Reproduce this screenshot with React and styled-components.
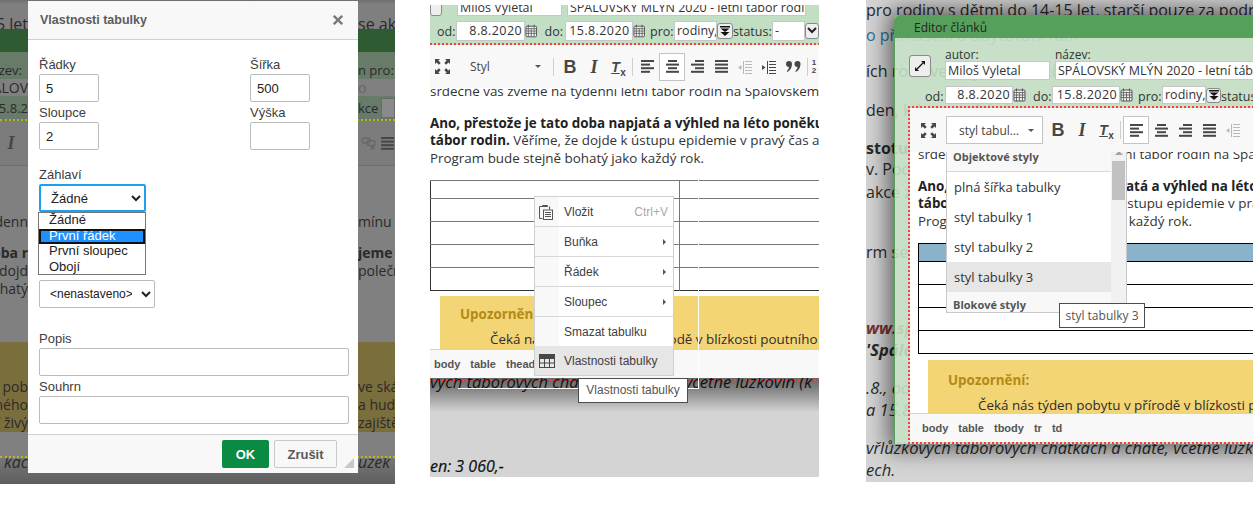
import React from 'react'
import styled, { createGlobalStyle } from 'styled-components'

const GlobalStyle = createGlobalStyle`
    html, body { margin: 0; padding: 0; background: #fff; }
    body { font-family: "Open Sans", sans-serif; color: #222; }
    * { box-sizing: border-box; }
`

const UI_FONT = '"Liberation Sans", Arial, sans-serif'
const PAGE_FONT = '"Open Sans", sans-serif'
const DOTS_X = 'repeating-linear-gradient(90deg, #ff3b3b 0 2px, transparent 2px 4px)'
const DOTS_Y = 'repeating-linear-gradient(0deg, #ff3b3b 0 2px, transparent 2px 4px)'

const Page = styled.div`
    display: flex;
    align-items: flex-start;
    width: 1256px;
    height: 510px;
    overflow: hidden;
`
const Shot = styled.section`
    position: relative;
    flex: none;
    overflow: hidden;
    width: ${p => p.$w}px;
    height: ${p => p.$h}px;
    margin-left: ${p => p.$left || 0}px;
    background: ${p => p.$bg || '#d4d4d4'};
`

/* ---------- shot 1, dimmed page behind the dialog ---------- */
const Band = styled.div`
    display: grid;
    grid-template-columns: 28px 1fr 37px;
    overflow: hidden;
    height: ${p => p.$h}px;
    background: ${p => p.$bg};
    align-items: ${p => p.$align || 'center'};
    font-size: ${p => p.$size || 14}px;
    font-weight: ${p => (p.$bold ? 700 : 400)};
    font-style: ${p => (p.$italic ? 'italic' : 'normal')};
    color: ${p => p.$color || '#2a2a2a'};
    line-height: 18px;
    border-bottom: ${p => p.$line || 'none'};
    > span { margin-top: ${p => p.$shift || 0}px; }
`
const SlotLeft = styled.span`
    grid-column: 1;
    overflow: hidden;
    white-space: nowrap;
    display: flex;
    justify-content: flex-end;
    padding-right: ${p => p.$pad || 0}px;
    align-self: ${p => (p.$fill ? 'stretch' : 'auto')};
    align-items: center;
    background: ${p => (p.$fill ? '#808080' : 'transparent')};
`
const SlotRight = styled.span`
    grid-column: 3;
    overflow: hidden;
    white-space: nowrap;
    display: flex;
    align-items: center;
    align-self: ${p => (p.$fill ? 'stretch' : 'auto')};
    background: ${p => (p.$fill ? '#808080' : 'transparent')};
    color: ${p => (p.$fill ? '#666' : 'inherit')};
`
const DimBox = styled.span`
    flex: none;
    display: block;
    width: 14px;
    height: 20px;
    margin-left: 3px;
    background: #8a8a8a;
    border: 1px solid #6a6a6a;
`

const Dialog = styled.div`
    position: absolute;
    left: 28px;
    top: 1px;
    width: 330px;
    height: 472px;
    display: flex;
    flex-direction: column;
    background: #fff;
    font-family: ${UI_FONT};
    font-size: 13px;
    color: #404040;
`
const DialogHead = styled.header`
    flex: none;
    height: 39px;
    display: flex;
    align-items: center;
    justify-content: space-between;
    padding: 0 15px 1px 12px;
    background: #f8f8f8;
    border-bottom: 1px solid #d1d1d1;
    font-size: 12.5px;
    font-weight: 700;
    color: #5c5c5c;
`
const DialogBody = styled.div`
    flex: 1;
    padding: 17px 9px 0 11px;
`
const TwoCols = styled.div`
    display: grid;
    grid-template-columns: 211px 60px;
`
const Field = styled.label`
    display: block;
    margin-top: ${p => p.$before || 0}px;
    margin-bottom: ${p => (p.$after === undefined ? 3 : p.$after)}px;
`
const Caption = styled.span`
    display: block;
    height: 17px;
    line-height: 15px;
    font-size: 13px;
    color: #404040;
`
const TextBox = styled.input`
    display: block;
    width: ${p => p.$w || '60px'};
    height: 28px;
    padding: 0 6px;
    border: 1px solid #bcbcbc;
    border-radius: 2px;
    font: 13px ${UI_FONT};
    color: #222;
    background: #fff;
    outline: none;
`
const NativeSelect = styled.select`
    display: block;
    width: ${p => p.$w}px;
    height: 28px;
    padding: 0 6px;
    border: ${p => (p.$focus ? '2px solid #1e9ff2' : '1px solid #bcbcbc')};
    border-radius: 2px;
    font: ${p => (p.$focus ? '13px' : '12px')} ${UI_FONT};
    color: #222;
    background: #fff;
    outline: none;
`
const OptionList = styled.ul`
    list-style: none;
    margin: 0 0 5px -1px;
    padding: 0;
    width: 108px;
    height: 63px;
    border: 1px solid #767676;
    background: #fff;
    font-size: 13px;
    line-height: 14px;
`
const OptionRow = styled.li`
    height: 15.5px;
    padding-left: 10px;
    color: ${p => (p.$active ? '#fff' : '#222')};
    background: ${p => (p.$active ? '#1e90ff' : 'transparent')};
    outline: ${p => (p.$active ? '2px solid #111' : 'none')};
    outline-offset: -2px;
`
const DialogFoot = styled.footer`
    flex: none;
    height: 39px;
    display: flex;
    align-items: center;
    gap: 5px;
    padding: 0 0 0 194px;
    background: #f8f8f8;
    border-top: 1px solid #d1d1d1;
`
const ButtonOk = styled.button`
    flex: none;
    width: 47px;
    height: 28px;
    border: 0;
    border-radius: 2px;
    background: #0a8a43;
    color: #fff;
    font: 700 13px ${UI_FONT};
`
const ButtonCancel = styled.button`
    flex: none;
    width: 63px;
    height: 28px;
    border: 1px solid #c9c9c9;
    border-radius: 2px;
    background: #f8f8f8;
    color: #595959;
    font: 700 13px ${UI_FONT};
`
const Grip = styled.span`
    flex: none;
    width: 0;
    height: 0;
    margin: 18px 0 0 2px;
    border-style: solid;
    border-width: 0 0 10px 10px;
    border-color: transparent transparent #c8c8c8 transparent;
`

/* ---------- editor parts shared by shot 2 and 3 ---------- */
const FormRow = styled.div`
    display: flex;
    align-items: center;
    height: ${p => p.$h || 20}px;
    padding-left: ${p => p.$left || 0}px;
    font-size: 12.5px;
    color: #333;
    white-space: nowrap;
`
const FormLabel = styled.span`
    flex: none;
    width: ${p => p.$w}px;
    padding-left: ${p => p.$pad || 0}px;
    padding-top: 2px;
`
const FormInput = styled.div`
    flex: none;
    width: ${p => p.$w}px;
    height: ${p => p.$h || 20}px;
    margin-right: ${p => p.$right || 0}px;
    padding: 0 2px;
    overflow: hidden;
    background: #fff;
    border: 1px solid #c7c7c7;
    font-size: 12.5px;
    line-height: ${p => (p.$h || 20) - 2}px;
    text-align: ${p => p.$align || 'left'};
    letter-spacing: ${p => (p.$align === 'right' ? '0.4px' : '0')};
    color: #333;
`
const SmallBtn = styled.span`
    flex: none;
    display: flex;
    align-items: center;
    justify-content: center;
    width: ${p => p.$w}px;
    height: ${p => p.$h}px;
    margin-right: ${p => p.$right || 0}px;
    background: #eeeeee;
    border: 1px solid #8a8a8a;
    border-radius: 3px;
`
const Toolbar = styled.div`
    flex: none;
    display: flex;
    align-items: center;
    height: ${p => p.$h}px;
    background: #f8f8f8;
    color: #474747;
`
const ToolBtn = styled.span`
    flex: none;
    display: flex;
    align-items: center;
    justify-content: center;
    width: ${p => p.$w || 24}px;
    height: 28px;
    color: #474747;
    opacity: ${p => (p.$faded ? 0.35 : 1)};
    background: ${p => (p.$on ? '#fff' : 'transparent')};
    border: ${p => (p.$on ? '1px solid #c4c4c4' : '0')};
`
const Sep = styled.span`
    flex: none;
    width: 1px;
    height: 18px;
    margin: 0 ${p => p.$gap || 2}px;
    background: #cfcfcf;
`
const Glyph = styled.span`
    font-family: ${p => (p.$serif ? '"Liberation Serif", serif' : UI_FONT)};
    font-size: ${p => p.$size || 16}px;
    font-weight: 700;
    font-style: ${p => (p.$italic ? 'italic' : 'normal')};
    line-height: 1;
`
const ClearGlyph = styled(Glyph)`
    position: relative;
    text-decoration: underline;
    margin-right: 5px;
    small {
        position: absolute;
        left: 9px;
        top: 7px;
        font: 700 10px ${UI_FONT};
        text-decoration: none;
    }
`
const NumberStack = styled.span`
    font: 700 8px/8px ${UI_FONT};
    text-align: center;
    white-space: pre;
`
const ComboLabel = styled.span`
    flex: 1;
    font: 12px ${PAGE_FONT};
    color: #444;
`
const Combo = styled.span`
    flex: none;
    display: flex;
    align-items: center;
    width: ${p => p.$w}px;
    height: 28px;
    margin: 0 ${p => p.$right || 0}px 0 ${p => p.$left || 0}px;
    padding: 0 8px 0 12px;
    background: ${p => (p.$open ? '#fff' : 'transparent')};
    border: ${p => (p.$open ? '1px solid #c4c4c4' : '0')};
`
const Caret = styled.span`
    width: 0;
    height: 0;
    border-left: 3px solid transparent;
    border-right: 3px solid transparent;
    border-top: 3px solid #555;
`
const Paper = styled.div`
    flex: none;
    position: relative;
    overflow: hidden;
    height: ${p => p.$h}px;
    padding-left: ${p => p.$pad || 0}px;
    background: #fff;
    font-size: 13.4px;
    line-height: 17.5px;
    color: #333;
`
const Para = styled.p`
    margin: ${p => p.$top || 0}px 0 0;
    white-space: nowrap;
    strong { color: #222; }
`
const DocTable = styled.table`
    border-collapse: collapse;
    margin: ${p => p.$top}px 0 0;
    width: 700px;
    table-layout: fixed;
    border: ${p => p.$border};
    td {
        border-top: 1px solid ${p => p.$line};
        height: 23px;
        padding: 0;
    }
    td + td { border-left: 1px solid ${p => p.$line}; }
    tr:first-child td {
        height: ${p => p.$head}px;
        background: ${p => p.$headBg || 'transparent'};
    }
`
const Notice = styled.div`
    margin: ${p => p.$top}px 0 0 10px;
    height: 60px;
    padding: ${p => p.$pad || 10}px 20px;
    background: #f3d576;
    white-space: nowrap;
`
const NoticeTitle = styled.div`
    font-weight: 700;
    color: #b28a16;
`
const NoticeText = styled.div`
    margin: 7px 0 0 ${p => p.$indent}px;
    color: #2d2d2d;
`
const PathBar = styled.div`
    flex: none;
    display: flex;
    align-items: center;
    gap: 10px;
    height: 29px;
    padding-left: ${p => p.$left}px;
    background: #f8f8f8;
    border-top: 1px solid #d1d1d1;
    font: 700 11px ${UI_FONT};
    color: #555;
`
const Tip = styled.div`
    position: absolute;
    left: ${p => p.$x}px;
    top: ${p => p.$y}px;
    width: ${p => p.$w}px;
    height: 25px;
    z-index: 5;
    background: #fff;
    border: 1px solid #4d4d4d;
    text-align: center;
    font: ${p => p.$font};
    line-height: 23px;
    color: #555;
    white-space: nowrap;
`

/* ---------- shot 2 ---------- */
const Column = styled.div`
    display: flex;
    flex-direction: column;
    height: 100%;
    padding-top: 5px;
    background: #fff;
`
const GreenForm = styled.div`
    flex: none;
    height: 40px;
    background: ${DOTS_X} bottom / 100% 2px no-repeat, #c3dfc3;
    overflow: hidden;
`
const ClippedRow = styled(FormRow)`
    margin-top: -5px;
    height: 16px;
`
const BelowEditor = styled.div`
    flex: 1;
    font-size: 16.5px;
    font-style: italic;
    color: #111;
    white-space: nowrap;
    overflow: hidden;
    background: ${DOTS_X} 0 1px / 100% 2px no-repeat,
        linear-gradient(#666 0, #808080 10px, #d4d4d4 34px);
`
const BelowLine = styled.div`
    margin-top: ${p => p.$top}px;
    line-height: 20px;
    font-size: ${p => p.$size || 16.5}px;
    font-weight: 400;
    -webkit-text-stroke: ${p => p.$stroke || 0}px #111;
`
const Guide = styled.span`
    position: absolute;
    z-index: 1;
    background: #fff;
    left: ${p => p.$x}px;
    top: ${p => p.$y}px;
    width: ${p => p.$w}px;
    height: ${p => p.$h}px;
`
const Menu = styled.div`
    position: absolute;
    z-index: 3;
    left: 104px;
    top: 196px;
    width: 140px;
    border: 1px solid #d1d1d1;
    background: linear-gradient(90deg, #f8f8f8 24px, #fff 24px);
    font: 12px ${UI_FONT};
    color: #404040;
`
const MenuItem = styled.div`
    display: flex;
    align-items: center;
    height: ${p => (p.$first || p.$on ? 29 : 30)}px;
    background: ${p => (p.$on ? '#e6e6e6' : 'transparent')};
    border-top: ${p => (p.$first || p.$on ? '0' : '1px solid #d8d8d8')};
`
const MenuIcon = styled.span`
    flex: none;
    width: 29px;
    padding-left: 4px;
    display: flex;
`
const MenuText = styled.span`
    flex: 1;
`
const Shortcut = styled.span`
    padding-right: 5px;
    color: #aaa;
`
const Arrow = styled.span`
    width: 0;
    height: 0;
    margin-right: 7px;
    border-top: 3px solid transparent;
    border-bottom: 3px solid transparent;
    border-left: 3px solid #555;
`

/* ---------- shot 3 ---------- */
const PageLine = styled.div`
    margin-top: ${p => p.$gap}px;
    height: 22px;
    line-height: 22px;
    font-size: ${p => (p.$italic ? 16.5 : 16)}px;
    font-style: ${p => (p.$italic ? 'italic' : 'normal')};
    font-weight: ${p => (p.$bold ? 700 : 400)};
    color: ${p => p.$color || '#2a2a2a'};
    white-space: nowrap;
`
const EditorWindow = styled.div`
    position: absolute;
    left: 28px;
    top: 15px;
    width: 420px;
    height: 429px;
    display: flex;
    flex-direction: column;
    background: rgba(197, 225, 197, 0.9);
    border-left: 1px solid #57a05c;
    border-top-left-radius: 5px;
    box-shadow: 0 0 22px 6px rgba(0, 0, 0, 0.55);
`
const WindowTitle = styled.div`
    flex: none;
    height: 23px;
    padding-left: 19px;
    line-height: 25px;
    background: #57a05c;
    font-size: 12px;
    color: #222;
    border-top-left-radius: 5px;
`
const MetaBlock = styled.div`
    flex: none;
    height: 68px;
    padding: 11px 0 0 14px;
    display: flex;
    flex-direction: column;
`
const MetaTop = styled.div`
    display: flex;
    height: 37px;
`
const MetaField = styled.div`
    flex: none;
    margin-right: ${p => p.$right || 0}px;
    font-size: 12px;
    line-height: 12px;
    color: #333;
`
const ExpandBtn = styled.span`
    flex: none;
    display: flex;
    align-items: center;
    justify-content: center;
    width: 22px;
    height: 22px;
    margin: 6px 14px 0 0;
    background: #eee;
    border: 1px solid #8a8a8a;
    border-radius: 3px;
`
const EditorFrame = styled.div`
    flex: 1;
    display: flex;
    flex-direction: column;
    margin-left: 13px;
    padding: 2px 0 2px 2px;
    background:
        ${DOTS_X} top / 100% 2px no-repeat,
        ${DOTS_X} bottom / 100% 2px no-repeat,
        ${DOTS_Y} left / 2px 100% no-repeat;
`
const StylePanel = styled.div`
    position: absolute;
    z-index: 3;
    left: 36px;
    top: -9px;
    width: 181px;
    height: 170px;
    display: grid;
    grid-template-columns: 164px 1fr;
    background: #fff;
    border: 1px solid #c9c9c9;
`
const StyleList = styled.div`
    overflow: hidden;
    height: 168px;
`
const StyleHead = styled.div`
    height: ${p => p.$h}px;
    padding-left: 6px;
    line-height: ${p => p.$h - 2}px;
    background: #f8f8f8;
    border-bottom: ${p => (p.$rule ? '1px solid #d9d9d9' : '0')};
    font-size: 11px;
    font-weight: 700;
    color: #555;
`
const StyleItem = styled.div`
    height: 30px;
    padding-left: 7px;
    line-height: 30px;
    font-size: 13px;
    background: ${p => (p.$on ? '#e6e6e6' : '#fff')};
    color: #333;
`
const ScrollTrack = styled.div`
    background: #f1f1f1;
    display: flex;
    flex-direction: column;
    align-items: center;
    padding-top: 7px;
`
const ScrollThumb = styled.div`
    width: 13px;
    height: 39px;
    margin-top: 6px;
    background: #c1c1c1;
`
const ScrollUp = styled.span`
    width: 0;
    height: 0;
    border-left: 4px solid transparent;
    border-right: 4px solid transparent;
    border-bottom: 4px solid #a3a3a3;
`

/* ---------- drawings ---------- */
const alignRows = {
    left: [[0, 13], [0, 9], [0, 13], [0, 9]],
    center: [[2, 9], [0, 13], [2, 9], [0, 13]],
    right: [[4, 9], [0, 13], [4, 9], [0, 13]],
    justify: [[0, 13], [0, 13], [0, 13], [0, 13]],
}
const AlignIcon = ({ kind }) => (
    <svg width="13" height="13" viewBox="0 0 13 13" fill="currentColor">
        {alignRows[kind].map(([x, w], i) => (
            <rect key={i} x={x} y={i * 3.6} width={w} height="2" />
        ))}
    </svg>
)
const IndentIcon = ({ out }) => (
    <svg width="14" height="14" viewBox="0 0 14 14" fill="currentColor">
        <path d="M7 1h7v1H7zM7 4h7v1H7zM7 7h7v1H7zM7 10h7v1H7zM7 13h7v1H7zM5 1h1v13H5z" />
        <path d={out ? 'M0 7.500 3.500 5v5z' : 'M3.500 7.500 0 5v5z'} />
    </svg>
)
const QuoteIcon = () => (
    <svg width="15" height="11" viewBox="0 0 15 11" fill="currentColor">
        <path d="M3 0a3 3 0 0 1 3 3c0 3.500-1.800 6.500-4.500 8L.8 10C2 9 2.800 7.600 3 6A3 3 0 0 1 3 0z" />
        <path d="M11.500 0a3 3 0 0 1 3 3c0 3.500-1.800 6.500-4.500 8L9.300 10c1.200-1 2-2.400 2.200-4a3 3 0 0 1 0-6z" />
    </svg>
)
const UnlinkIcon = () => (
    <svg width="16" height="14" viewBox="0 0 16 14" fill="none" stroke="#444" strokeWidth="1.500">
        <rect x="1" y="2" width="8" height="5" rx="2.500" />
        <rect x="6" y="4.500" width="8" height="5" rx="2.500" />
        <path d="M9.500 9.500l4 4M13.500 9.500l-4 4" />
    </svg>
)
const FullscreenIcon = () => (
    <svg width="15" height="15" viewBox="0 0 15 15" fill="#474747">
        <path d="M0 0h5L3.400 1.600 5.700 3.900 3.900 5.700 1.600 3.400 0 5zM15 0v5L13.400 3.400 11.100 5.700 9.300 3.900 11.600 1.600 10 0zM0 15v-5l1.600 1.600 2.300-2.300 1.800 1.800-2.300 2.300L5 15zM15 15h-5l1.600-1.600-2.300-2.300 1.800-1.800 2.300 2.300L15 10z" />
    </svg>
)
const CalendarIcon = () => (
    <svg width="13" height="14" viewBox="0 0 13 14" fill="none" stroke="#555">
        <rect x="1" y="2" width="11" height="11" rx="1" fill="#eee" />
        <path d="M1 4.500h11M1 7h11M1 9.500h11M3.500 4.500V13M6.500 4.500V13M9.500 4.500V13" strokeWidth="0.8" />
        <path d="M3.500 .5v3M9.500 .5v3" />
    </svg>
)
const DoubleDown = () => (
    <svg width="10" height="10" viewBox="0 0 10 10" fill="#111">
        <path d="M0 0h10v1.500H0zM.5 2.500h9L5 6zM.5 6h9L5 10z" />
    </svg>
)
const Chevron = () => (
    <svg width="10" height="7" viewBox="0 0 10 7" fill="none" stroke="#222" strokeWidth="2">
        <path d="M1 1l4 4 4-4" />
    </svg>
)
const ExpandArrow = () => (
    <svg width="12" height="12" viewBox="0 0 12 12" fill="#111" stroke="none">
        <path d="M3 9l6-6" stroke="#111" strokeWidth="1.200" />
        <path d="M7 1h4v4zM1 7v4h4z" />
    </svg>
)
const CloseIcon = () => (
    <svg width="10" height="10" viewBox="0 0 10 10" stroke="#7a7a7a" strokeWidth="2.400">
        <path d="M.8.800l8.400 8.400M9.200.800.800 9.200" />
    </svg>
)
const PasteIcon = () => (
    <svg width="14" height="16" viewBox="0 0 14 16" fill="none" stroke="#555">
        <path d="M3.500 2.500h-3v12h3" />
        <path d="M3.500 2.500h5v-1h-5z" fill="#555" />
        <path d="M10.500 2.500v3" />
        <rect x="4.500" y="6" width="9" height="9.500" />
        <path d="M6 8.500h6M6 10.500h6M6 12.500h6" />
    </svg>
)
const TableIcon = () => (
    <svg width="16" height="14" viewBox="0 0 16 14" fill="none" stroke="#474747">
        <rect x=".5" y=".5" width="15" height="13" />
        <rect x=".5" y=".5" width="15" height="4" fill="#474747" />
        <path d="M5.500 4.500v9M10.500 4.500v9M.5 9h15" />
    </svg>
)

/* ---------- data ---------- */
const contextItems = [
    { label: 'Vložit', icon: <PasteIcon />, shortcut: 'Ctrl+V' },
    { label: 'Buňka', more: true },
    { label: 'Řádek', more: true },
    { label: 'Sloupec', more: true },
    { label: 'Smazat tabulku' },
    { label: 'Vlastnosti tabulky', icon: <TableIcon />, on: true },
]

const pageLines = [
    { top: -1, text: 'pro rodiny s dětmi do 14-15 let, starší pouze za podr' },
    { top: 24, text: 'o přihlášení a ubytování rám', color: '#2b6f9e' },
    { top: 60, text: 'ích roků ve stejném termínu' },
    { top: 99, text: 'den, kdy se setkáváme' },
    { top: 137, text: 'stotu, že', bold: true },
    { top: 158, text: 'v. Pod' },
    { top: 181, text: 'akce z' },
    { top: 241, text: 'rm se' },
    { top: 317, text: 'ww.spalov', bold: true, italic: true, color: '#7b3030' },
    { top: 339, text: "'Spálov", bold: true, italic: true },
    { top: 377, text: '.8., od', italic: true },
    { top: 399, text: 'a 15.8', italic: true },
    { top: 437, text: 'vřlůžkových táborových chatkách a chatě, včetně lůžk', italic: true },
    { top: 459, text: 'ech.', italic: true },
]

const FormatButtons = ({ active, tail }) => (
    <>
        <ToolBtn><Glyph $size={18}>B</Glyph></ToolBtn>
        <ToolBtn><Glyph $size={18} $serif $italic>I</Glyph></ToolBtn>
        <ToolBtn><ClearGlyph $size={14} $italic>T<small>x</small></ClearGlyph></ToolBtn>
        <Sep />
        {['left', 'center', 'right', 'justify'].map(kind => (
            <ToolBtn key={kind} $on={active === kind} $w={active === kind ? 26 : 24}>
                <AlignIcon kind={kind} />
            </ToolBtn>
        ))}
        <ToolBtn $faded><IndentIcon out /></ToolBtn>
        {tail}
    </>
)

const FORM_DIM = '#687a68'

const BackdropBands = () => (
    <>
        <Band $h={29} $bg="linear-gradient(#6e6e6e, #7f7f7f 4px)" $size={16} $align="start" $shift={15}>
            <SlotLeft>5 let</SlotLeft><SlotRight>se ak</SlotRight>
        </Band>
        <Band $h={23} $bg="#2f5b33" />
        <Band $h={27} $bg={FORM_DIM} $size={13} $align="end">
            <SlotLeft $pad={6}>zev:</SlotLeft><SlotRight>n pro:</SlotRight>
        </Band>
        <Band $h={17} $bg={FORM_DIM} $size={14}>
            <SlotLeft $fill>PÁLOV</SlotLeft><SlotRight $fill>o</SlotRight>
        </Band>
        <Band $h={25} $bg={FORM_DIM} $size={13} $line="2px dotted #b5b520">
            <SlotLeft>5.8.2</SlotLeft><SlotRight>kce<DimBox /></SlotRight>
        </Band>
        <Band $h={45} $bg="#7c7c7c" $line="1px solid #6e6e6e">
            <SlotLeft>
                <ToolBtn $w={22}><Glyph $size={18} $serif $italic>I</Glyph></ToolBtn>
                <ToolBtn $w={6} />
            </SlotLeft>
            <SlotRight>
                <ToolBtn $w={22} $faded><UnlinkIcon /></ToolBtn>
                <ToolBtn $w={15}><AlignIcon kind="justify" /></ToolBtn>
            </SlotRight>
        </Band>
        <Band $h={47} $bg="#808080" />
        <Band $h={18} $bg="#808080"><SlotLeft>denn</SlotLeft><SlotRight>mínu 8</SlotRight></Band>
        <Band $h={13} $bg="#808080" />
        <Band $h={18} $bg="#808080" $bold><SlotLeft>oba r</SlotLeft><SlotRight>jeme</SlotRight></Band>
        <Band $h={18} $bg="#808080"><SlotLeft>dojd</SlotLeft><SlotRight>polečn</SlotRight></Band>
        <Band $h={18} $bg="#808080"><SlotLeft>hatý</SlotLeft></Band>
        <Band $h={44} $bg="#808080" />
        <Band $h={36} $bg="#7b6e3d" />
        <Band $h={18} $bg="#7b6e3d"><SlotLeft>n pob</SlotLeft><SlotRight>ve ská</SlotRight></Band>
        <Band $h={18} $bg="#7b6e3d"><SlotLeft>ného</SlotLeft><SlotRight>a hudb</SlotRight></Band>
        <Band $h={18} $bg="#7b6e3d"><SlotLeft>í živý</SlotLeft><SlotRight>zajiště</SlotRight></Band>
        <Band $h={26} $bg="#808080" $line="2px dotted #b8b820" />
        <Band $h={28} $bg="linear-gradient(#777, #5c5c5c)" $italic $size={16} $align="start" $shift={-5}>
            <SlotLeft>kac</SlotLeft><SlotRight>uzek</SlotRight>
        </Band>
    </>
)

const App = () => {
    return (
        <Page>
            <GlobalStyle />

            <Shot $w={395} $h={484} $bg="#808080">
                <BackdropBands />
                <Dialog>
                    <DialogHead>Vlastnosti tabulky<CloseIcon /></DialogHead>
                    <DialogBody>
                        <TwoCols>
                            <div>
                                <Field>
                                    <Caption>Řádky</Caption>
                                    <TextBox defaultValue="5" />
                                </Field>
                                <Field>
                                    <Caption>Sloupce</Caption>
                                    <TextBox defaultValue="2" />
                                </Field>
                            </div>
                            <div>
                                <Field>
                                    <Caption>Šířka</Caption>
                                    <TextBox defaultValue="500" />
                                </Field>
                                <Field>
                                    <Caption>Výška</Caption>
                                    <TextBox />
                                </Field>
                            </div>
                        </TwoCols>
                        <Field $before={14} $after={0}>
                            <Caption>Záhlaví</Caption>
                            <NativeSelect $w={107} $focus defaultValue="Žádné">
                                <option>Žádné</option>
                                <option>První řádek</option>
                                <option>První sloupec</option>
                                <option>Obojí</option>
                            </NativeSelect>
                        </Field>
                        <OptionList>
                            <OptionRow>Žádné</OptionRow>
                            <OptionRow $active>První řádek</OptionRow>
                            <OptionRow>První sloupec</OptionRow>
                            <OptionRow>Obojí</OptionRow>
                        </OptionList>
                        <Field $after={23}>
                            <NativeSelect $w={116} defaultValue="&lt;nenastaveno&gt;">
                                <option>&lt;nenastaveno&gt;</option>
                            </NativeSelect>
                        </Field>
                        <Field>
                            <Caption>Popis</Caption>
                            <TextBox $w="310px" />
                        </Field>
                        <Field>
                            <Caption>Souhrn</Caption>
                            <TextBox $w="310px" />
                        </Field>
                    </DialogBody>
                    <DialogFoot>
                        <ButtonOk>OK</ButtonOk>
                        <ButtonCancel>Zrušit</ButtonCancel>
                        <Grip />
                    </DialogFoot>
                </Dialog>
            </Shot>

            <Shot $w={389} $h={477} $left={35}>
                <Column>
                    <GreenForm>
                        <ClippedRow>
                            <SmallBtn $w={12} $h={16} $right={15} />
                            <FormInput $w={105} $h={16} $right={5}>Miloš Vyletal</FormInput>
                            <FormInput $w={239} $h={16}>SPÁLOVSKÝ MLÝN 2020 - letní tábor rodin</FormInput>
                        </ClippedRow>
                        <FormRow $h={29} $left={7}>
                            <FormLabel $w={19}>od:</FormLabel>
                            <FormInput $w={69} $align="right">8.8.2020</FormInput>
                            <CalendarIcon />
                            <FormLabel $w={27} $pad={7}>do:</FormLabel>
                            <FormInput $w={68} $align="right">15.8.2020</FormInput>
                            <CalendarIcon />
                            <FormLabel $w={29} $pad={5}>pro:</FormLabel>
                            <FormInput $w={43}>rodiny,</FormInput>
                            <SmallBtn $w={16} $h={16}><DoubleDown /></SmallBtn>
                            <FormLabel $w={39}>status:</FormLabel>
                            <FormInput $w={33}>-</FormInput>
                            <SmallBtn $w={14} $h={16}><Chevron /></SmallBtn>
                        </FormRow>
                    </GreenForm>
                    <Toolbar $h={43}>
                        <ToolBtn><FullscreenIcon /></ToolBtn>
                        <Combo $w={91} $left={4}><ComboLabel>Styl</ComboLabel><Caret /></Combo>
                        <Sep $gap={4} />
                        <FormatButtons
                            active="center"
                            tail={
                                <>
                                    <ToolBtn><IndentIcon /></ToolBtn>
                                    <ToolBtn><QuoteIcon /></ToolBtn>
                                    <Sep />
                                    <ToolBtn $w={8}><NumberStack>{'1\n2'}</NumberStack></ToolBtn>
                                </>
                            }
                        />
                    </Toolbar>
                    <Paper $h={261}>
                        <Para $top={-5}>srdečně vás zveme na týdenní letní tábor rodin na Špalovském</Para>
                        <Para $top={14}><strong>Ano, přestože je tato doba napjatá a výhled na léto poněku</strong></Para>
                        <Para><strong>tábor rodin.</strong> Věříme, že dojde k ústupu epidemie v pravý čas a</Para>
                        <Para>Program bude stejně bohatý jako každý rok.</Para>
                        <DocTable $top={13} $border="1px solid #333" $line="#777" $head={18}>
                            <colgroup><col width="249" /><col /></colgroup>
                            <tbody>
                                {[0, 1, 2, 3, 4].map(row => <tr key={row}><td /><td /></tr>)}
                            </tbody>
                        </DocTable>
                        <Notice $top={5}>
                            <NoticeTitle>Upozornění:</NoticeTitle>
                            <NoticeText $indent={30}>Čeká nás týden pobytu v přírodě v blízkosti poutního místa</NoticeText>
                        </Notice>
                    </Paper>
                    <PathBar $left={4}>
                        <span>body</span><span>table</span><span>thead</span>
                    </PathBar>
                    <BelowEditor>
                        <BelowLine $top={-6}>vých táborových chatkách a chatě, včetně lůžkovin (k</BelowLine>
                        <BelowLine $top={64} $size={16} $stroke={0.2}>en: 3 060,-</BelowLine>
                    </BelowEditor>
                </Column>
                <Guide $x={268} $y={180} $w={1} $h={208} />
                <Guide $x={28} $y={388} $w={241} $h={1} />
                <Menu>
                    {contextItems.map((item, i) => (
                        <MenuItem key={item.label} $first={i === 0} $on={item.on}>
                            <MenuIcon>{item.icon}</MenuIcon>
                            <MenuText>{item.label}</MenuText>
                            {item.shortcut && <Shortcut>{item.shortcut}</Shortcut>}
                            {item.more && <Arrow />}
                        </MenuItem>
                    ))}
                </Menu>
                <Tip $x={148} $y={378} $w={110} $font={`12px ${UI_FONT}`}>Vlastnosti tabulky</Tip>
            </Shot>

            <Shot $w={387} $h={482} $left={47}>
                {pageLines.map((line, i) => (
                    <PageLine
                        key={line.top}
                        $gap={i === 0 ? line.top : line.top - pageLines[i - 1].top - 22}
                        $color={line.color}
                        $bold={line.bold}
                        $italic={line.italic}
                    >
                        {line.text}
                    </PageLine>
                ))}
                <EditorWindow>
                    <WindowTitle>Editor článků</WindowTitle>
                    <MetaBlock>
                        <MetaTop>
                            <ExpandBtn><ExpandArrow /></ExpandBtn>
                            <MetaField $right={5}>
                                autor:
                                <FormInput $w={105} $h={19}>Miloš Vyletal</FormInput>
                            </MetaField>
                            <MetaField>
                                název:
                                <FormInput $w={240} $h={19}>SPÁLOVSKÝ MLÝN 2020 - letní tábor rodin</FormInput>
                            </MetaField>
                        </MetaTop>
                        <FormRow $h={18} $left={16}>
                            <FormLabel $w={20}>od:</FormLabel>
                            <FormInput $w={68} $h={18} $align="right">8.8.2020</FormInput>
                            <CalendarIcon />
                            <FormLabel $w={26} $pad={7}>do:</FormLabel>
                            <FormInput $w={68} $h={18} $align="right">15.8.2020</FormInput>
                            <CalendarIcon />
                            <FormLabel $w={29} $pad={5}>pro:</FormLabel>
                            <FormInput $w={44} $h={18}>rodiny,</FormInput>
                            <SmallBtn $w={15} $h={15}><DoubleDown /></SmallBtn>
                            <FormLabel $w={40}>status:</FormLabel>
                        </FormRow>
                    </MetaBlock>
                    <EditorFrame>
                        <Toolbar $h={44}>
                            <ToolBtn $w={36}><FullscreenIcon /></ToolBtn>
                            <Combo $w={97} $right={3} $open><ComboLabel>styl tabul…</ComboLabel><Caret /></Combo>
                            <FormatButtons active="left" />
                        </Toolbar>
                        <Paper $h={261} $pad={8}>
                            <Para $top={-6}>srdečně vás zveme na týdenní letní tábor rodin na Špalovském</Para>
                            <Para $top={14}><strong>Ano, přestože je tato doba napjatá a výhled na léto poněku</strong></Para>
                            <Para><strong>tábor rodin.</strong> Věříme, že dojde k ústupu epidemie v pravý čas a</Para>
                            <Para>Program bude stejně bohatý jako každý rok.</Para>
                            <DocTable $top={13} $border="1px solid #000" $line="#000" $head={18} $headBg="#8ab2cb">
                                <tbody>
                                    {[0, 1, 2, 3, 4].map(row => <tr key={row}><td /></tr>)}
                                </tbody>
                            </DocTable>
                            <Notice $top={6} $pad={12}>
                                <NoticeTitle>Upozornění:</NoticeTitle>
                                <NoticeText $indent={30}>Čeká nás týden pobytu v přírodě v blízkosti poutního</NoticeText>
                            </Notice>
                            <StylePanel>
                                <StyleList>
                                    <StyleHead $h={28} $rule>Objektové styly</StyleHead>
                                    <StyleItem>plná šířka tabulky</StyleItem>
                                    <StyleItem>styl tabulky 1</StyleItem>
                                    <StyleItem>styl tabulky 2</StyleItem>
                                    <StyleItem $on>styl tabulky 3</StyleItem>
                                    <StyleHead $h={28}>Blokové styly</StyleHead>
                                </StyleList>
                                <ScrollTrack>
                                    <ScrollUp />
                                    <ScrollThumb />
                                </ScrollTrack>
                            </StylePanel>
                        </Paper>
                        <PathBar $left={12}>
                            <span>body</span><span>table</span><span>tbody</span><span>tr</span><span>td</span>
                        </PathBar>
                    </EditorFrame>
                </EditorWindow>
                <Tip $x={193} $y={303} $w={86} $font={`12px ${PAGE_FONT}`}>styl tabulky 3</Tip>
            </Shot>
        </Page>
    )
}

export default App
